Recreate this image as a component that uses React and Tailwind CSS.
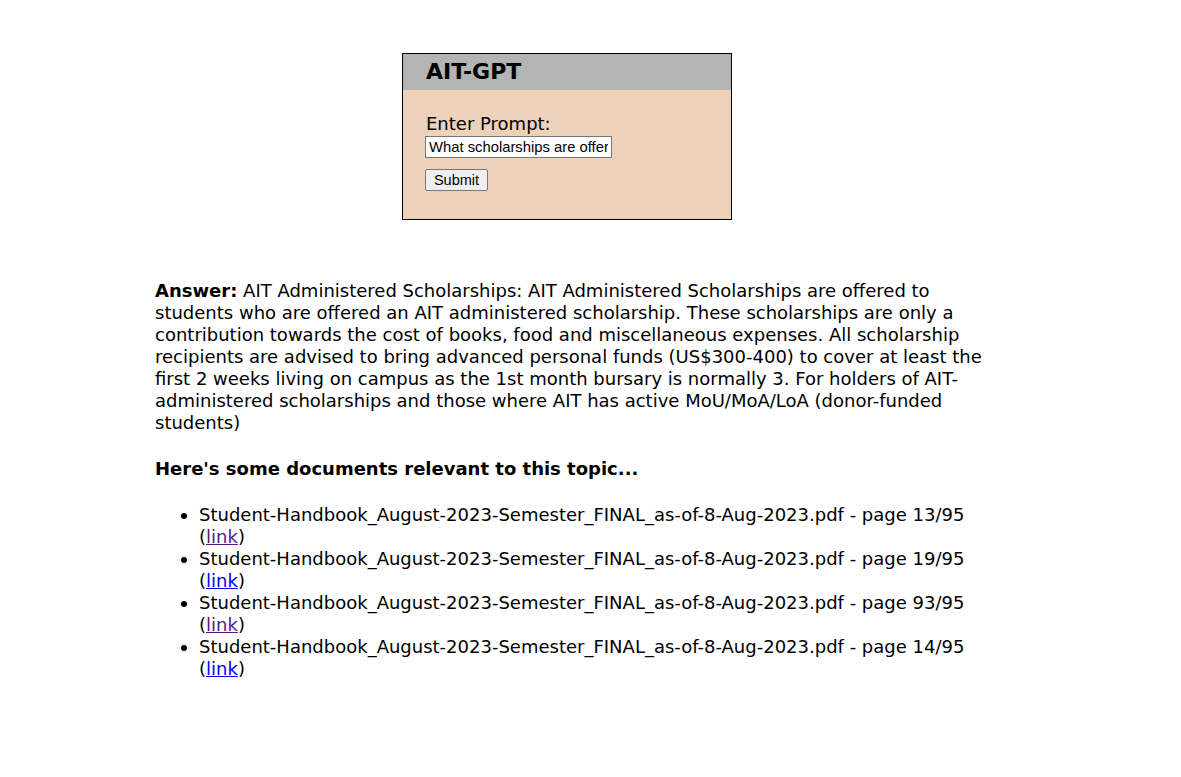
export default function App() {
  const docs = [
    { page: "13/95", visited: true },
    { page: "19/95", visited: false },
    { page: "93/95", visited: true },
    { page: "14/95", visited: false },
  ];
  const arial = { fontFamily: '"Liberation Sans", Arial, sans-serif' };
  return (
    <div className="min-h-[777px] bg-white text-black" style={{ fontFamily: '"DejaVu Sans", Verdana, sans-serif' }}>
      <div className="pt-[53px] pl-[402px]">
        <div className="w-[330px] h-[167px] border border-black bg-[#edd1b8]">
          <div className="h-[36px] bg-[#b4b4b4] pl-[23px] flex items-center">
            <h1 className="text-[22px] font-bold leading-none">AIT-GPT</h1>
          </div>
          <div className="pl-[22px] pt-[23px] flex flex-col items-start">
            <div className="text-[18px] leading-[22px] pl-[1px]">Enter Prompt:</div>
            <input
              type="text"
              defaultValue="What scholarships are offered?"
              className="block mt-[1px] w-[187px] h-[22px] border border-[#767676] bg-white px-[3px] text-[14.8px] leading-[18px] text-black outline-none"
              style={arial}
            />
            <button
              className="block mt-[11px] h-[22px] w-[63px] border border-[#767676] rounded-[2px] bg-[#efefef] text-[14.5px] leading-none text-black"
              style={arial}
            >
              Submit
            </button>
          </div>
        </div>
      </div>
      <div className="pl-[155px] pt-[60px] w-[985px] text-[18px] leading-[22px]">
        <p>
          <b>Answer:</b> AIT Administered Scholarships: AIT Administered Scholarships are offered to students who are offered an AIT administered scholarship. These scholarships are only a contribution towards the cost of books, food and miscellaneous expenses. All scholarship recipients are advised to bring advanced personal funds (US$300-400) to cover at least the first 2 weeks living on campus as the 1st month bursary is normally 3. For holders of AIT-administered scholarships and those where AIT has active MoU/MoA/LoA (donor-funded students)
        </p>
        <p className="mt-[24px] font-bold">Here's some documents relevant to this topic...</p>
        <ul className="mt-[24px] list-disc pl-[44px]">
          {docs.map((d, i) => (
            <li key={i}>
              Student-Handbook_August-2023-Semester_FINAL_as-of-8-Aug-2023.pdf - page {d.page} (
              <a href="#" className={d.visited ? "underline text-[#551a8b]" : "underline text-[#0000ee]"}>link</a>)
            </li>
          ))}
        </ul>
      </div>
    </div>
  );
}
